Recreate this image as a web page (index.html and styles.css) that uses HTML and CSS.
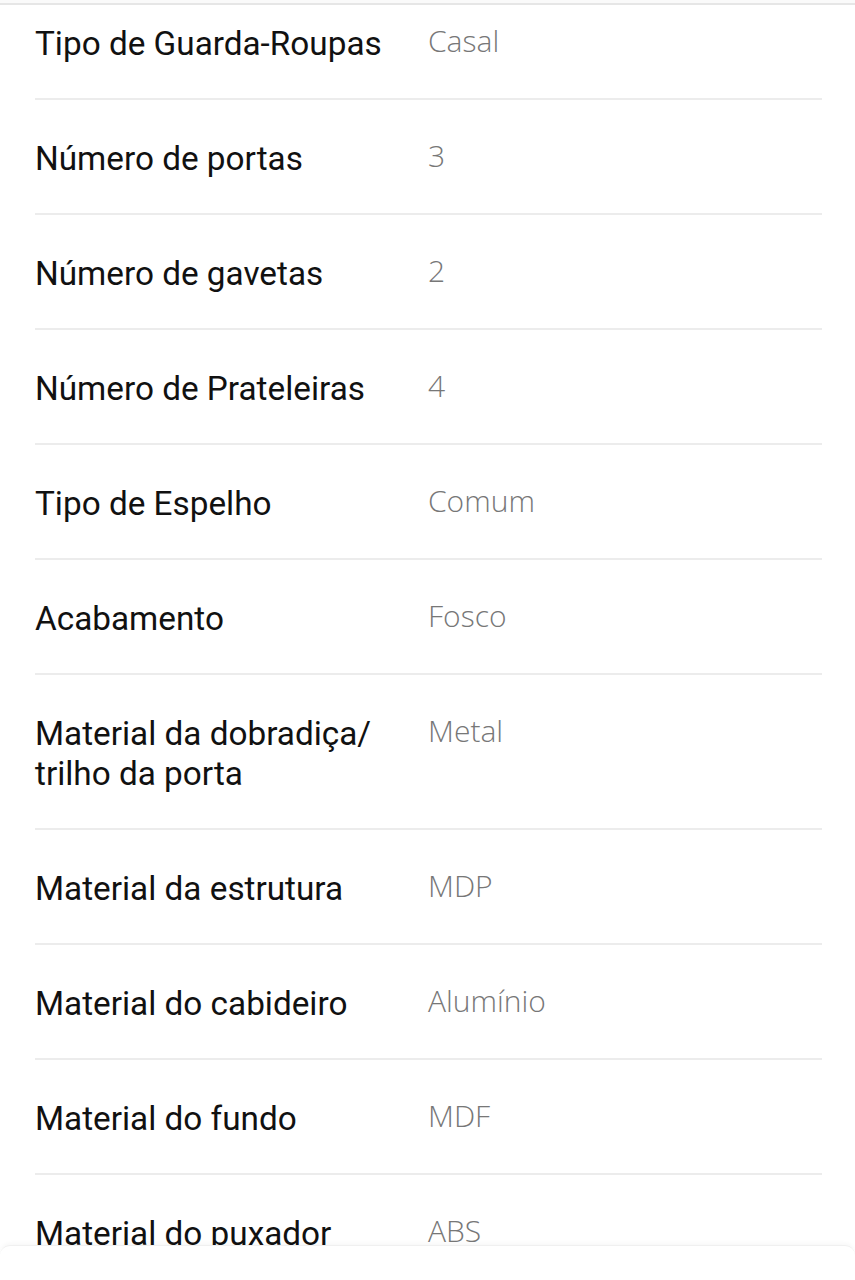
FILE: index.html
```html
<!DOCTYPE html>
<html lang="pt-BR">
<head>
  <meta charset="UTF-8" />
  <meta name="viewport" content="width=device-width, initial-scale=1.0"/>
  <title>Especificações</title>
  <link rel="stylesheet" href="styles.css">
</head>
<body>
  <div class="top-line"></div>

  <div class="specs">
    <div class="spec-row">
      <div class="spec-label">Tipo de Guarda-Roupas</div>
      <div class="spec-value">Casal</div>
    </div>
    <div class="spec-row">
      <div class="spec-label">Número de portas</div>
      <div class="spec-value">3</div>
    </div>
    <div class="spec-row">
      <div class="spec-label">Número de gavetas</div>
      <div class="spec-value">2</div>
    </div>
    <div class="spec-row">
      <div class="spec-label">Número de Prateleiras</div>
      <div class="spec-value">4</div>
    </div>
    <div class="spec-row">
      <div class="spec-label">Tipo de Espelho</div>
      <div class="spec-value">Comum</div>
    </div>
    <div class="spec-row">
      <div class="spec-label">Acabamento</div>
      <div class="spec-value">Fosco</div>
    </div>
    <div class="spec-row">
      <div class="spec-label">Material da dobradiça/ trilho da porta</div>
      <div class="spec-value">Metal</div>
    </div>
    <div class="spec-row">
      <div class="spec-label">Material da estrutura</div>
      <div class="spec-value">MDP</div>
    </div>
    <div class="spec-row">
      <div class="spec-label">Material do cabideiro</div>
      <div class="spec-value">Alumínio</div>
    </div>
    <div class="spec-row">
      <div class="spec-label">Material do fundo</div>
      <div class="spec-value">MDF</div>
    </div>
    <div class="spec-row">
      <div class="spec-label">Material do puxador</div>
      <div class="spec-value">ABS</div>
    </div>
  </div>

  <div class="bottom-bar"></div>
</body>
</html>
```

FILE: styles.css
```css
body {
  font-family: Roboto, "Noto Sans", sans-serif;
  background-color: #fff;
  margin: 0;
  padding: 0;
  height: 1280px;
  overflow: hidden;
}

.top-line {
  height: 3px;
  border-bottom: 2px solid #e6e6e6;
  background-color: #fafafa;
}

.specs {
  padding: 0 33px 0 35px;
}

.spec-row {
  display: grid;
  grid-template-columns: 393px 1fr;
  padding: 39px 0 34px;
  border-bottom: 2px solid #ececec;
  line-height: 40px;
}

.spec-row:first-child {
  padding-top: 19px;
}

.spec-label {
  font-size: 33.3px;
  color: #111;
  padding-right: 10px;
}

.spec-value {
  font-family: "Open Sans", sans-serif;
  font-weight: 300;
  font-size: 30px;
  color: #777;
  margin-top: -3px;
}

.bottom-bar {
  position: fixed;
  left: 0;
  right: 0;
  bottom: 0;
  height: 34px;
  background-color: #fff;
  border-top: 1px solid #f0f0f0;
  border-radius: 10px 10px 0 0;
  box-shadow: 0 -2px 4px rgba(0, 0, 0, 0.03);
}
```
